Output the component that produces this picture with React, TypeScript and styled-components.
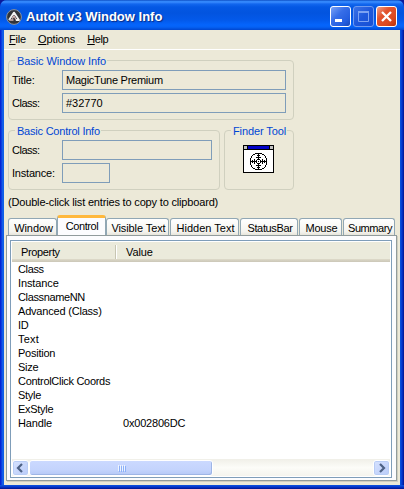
import React from "react";
import styled, { createGlobalStyle } from "styled-components";

const Global = createGlobalStyle`
  * { box-sizing: border-box; }
  body { margin: 0; overflow: hidden; background: #0a1a9a; }
`;

const Frame = styled.div`
  width: 404px;
  height: 489px;
  display: flex;
  flex-direction: column;
  overflow: hidden;
  border-radius: 7px 7px 0 0;
  background: linear-gradient(90deg, #0019cf 0, #0831d9 1px, #166aee 3px, #0855dd 4px, #0855dd 400px, #0436cf 402px, #00138c 404px);
  font: 11px/14px "Liberation Sans", Arial, sans-serif;
  color: #000;
  white-space: nowrap;
  cursor: default;
`;

const TitleBar = styled.header`
  height: 30px;
  flex: none;
  display: flex;
  align-items: center;
  padding: 3px 7px 0 6px;
  background: linear-gradient(180deg, #0a42b8 0, #2b82f5 1px, #3a8cff 2px, #1267ee 4px, #0458e4 7px, #0254df 13px, #0359ea 20px, #0565fc 25px, #0562f5 27px, #0046cf 30px);
`;

const Caption = styled.h1`
  flex: 1;
  margin: 1px 0 0 4px;
  color: #fff;
  font: bold 13px/20px "Liberation Sans", Arial, sans-serif;
  text-shadow: 1px 1px 1px #0a2a80;
`;

const Buttons = styled.div`
  display: flex;
  gap: 2px;
`;

const CaptionButton = styled.button<{ $kind: "min" | "max" | "close" }>`
  width: 21px;
  height: 21px;
  padding: 0;
  display: block;
  border-radius: 3px;
  border: 1px solid ${(p) => (p.$kind === "max" ? "#6e9af0" : "#fff")};
  background: ${(p) =>
    p.$kind === "close"
      ? "linear-gradient(135deg, #f0a18a 0, #e2532d 35%, #dc4a20 70%, #b83208 100%)"
      : p.$kind === "max"
      ? "linear-gradient(135deg, #3c72e6, #1e58dc 50%, #1750d4)"
      : "linear-gradient(135deg, #7aa2f6 0, #376ee8 40%, #245ee0 75%, #1848b8 100%)"};
  svg { display: block; }
`;

const Client = styled.main`
  width: 396px;
  height: 455px;
  margin-left: 4px;
  flex: none;
  background: #ece9d8;
  display: flex;
  flex-direction: column;
`;

const BottomEdge = styled.div`
  flex: 1;
  background: linear-gradient(180deg, #0d56dd, #0535cc 50%, #00138c);
`;

const MenuBar = styled.nav`
  height: 20px;
  flex: none;
  border-bottom: 1px solid #fff;
  display: flex;
  gap: 12px;
  padding: 2px 0 0 5px;
`;

const Txt = styled.span<{ $ls?: number }>`
  display: inline-block;
  letter-spacing: ${(p) => p.$ls ?? 0}px;
  u { text-underline-offset: 1px; }
`;

const Groups = styled.section`
  padding: 10px 0 0 4px;
  display: flex;
  flex-direction: column;
  gap: 10px;
  flex: none;
`;

const GroupRow = styled.div`
  display: flex;
  gap: 4px;
`;

const Group = styled.section<{ $w: number }>`
  width: ${(p) => p.$w}px;
  height: 60px;
  border: 1px solid #d0d0bf;
  border-radius: 4px;
  padding: 0 0 0 3px;
`;

const Legend = styled.h2<{ $ls: number }>`
  width: max-content;
  height: 14px;
  margin: -7px 0 2px 3px;
  padding: 0 1px 0 2px;
  background: #ece9d8;
  color: #0046d5;
  font-size: 11px;
  font-weight: normal;
  letter-spacing: ${(p) => p.$ls}px;
`;

const Field = styled.label`
  height: 20px;
  margin-bottom: 3px;
  display: flex;
`;

const FieldLabel = styled.span<{ $ls: number }>`
  width: 50px;
  padding-top: 3px;
  letter-spacing: ${(p) => p.$ls}px;
`;

const Box = styled.output<{ $w: number; $ls?: number }>`
  width: ${(p) => p.$w}px;
  height: 20px;
  border: 1px solid #7f9db9;
  padding: 2px 0 0 3px;
  line-height: 15px;
  letter-spacing: ${(p) => p.$ls ?? 0}px;
`;

const FinderIcon = styled.svg`
  display: block;
  margin: 7px 0 0 15px;
`;

const Hint = styled.p`
  margin: 5px 0 0 4px;
  height: 14px;
  flex: none;
  letter-spacing: -0.17px;
`;

const TabStrip = styled.div`
  height: 20px;
  margin: 6px 0 0 4px;
  flex: none;
  display: flex;
  align-items: flex-end;
  gap: 1px;
`;

const Tab = styled.div<{ $w: number; $ls: number; $active?: boolean }>`
  width: ${(p) => p.$w}px;
  height: ${(p) => (p.$active ? 21 : 17)}px;
  margin: ${(p) => (p.$active ? "0 -1px -1px -1px" : "0")};
  padding: ${(p) => (p.$active ? "1px 0 0 1px" : "2px 0 0 2px")};
  display: flex;
  justify-content: center;
  border: 1px solid #91a7b4;
  border-bottom: 0;
  border-top: ${(p) => (p.$active ? "3px solid #ffb83c" : "1px solid #91a7b4")};
  border-radius: 3px 3px 0 0;
  background: ${(p) => (p.$active ? "#fcfcfe" : "linear-gradient(#fff, #f4f3ee 80%, #e6e4da)")};
  letter-spacing: ${(p) => p.$ls}px;
`;

const Panel = styled.section`
  width: 391px;
  height: 246px;
  margin-left: 2px;
  flex: none;
  padding: 4px 3px 2px;
  border: 1px solid #919b9c;
  background: #fcfcfe;
  box-shadow: 1px 1px 0 #d0cebf;
`;

const ListView = styled.div`
  width: 382px;
  height: 238px;
  border: 1px solid #7f9db9;
  background: #fff;
  padding: 1px;
  display: flex;
  flex-direction: column;
`;

const HeaderRow = styled.div`
  height: 20px;
  flex: none;
  display: grid;
  grid-template-columns: 105px 1fr;
  background: linear-gradient(#ebeadb 0, #ebeadb 17px, #e0dccb 17px, #d6d2c2 18px, #cbc7b8 20px);
`;

const HeadCell = styled.div<{ $ls: number; $rule?: boolean }>`
  padding: 3px 0 0 9px;
  background: ${(p) =>
    p.$rule ? "linear-gradient(90deg, #c7c5b2 1px, #fff 1px) right 3px / 2px 14px no-repeat" : "none"};
  letter-spacing: ${(p) => p.$ls}px;
`;

const Rows = styled.div`
  flex: 1;
`;

const Row = styled.div`
  height: 14px;
  display: grid;
  grid-template-columns: 105px 1fr;
  padding-left: 6px;
`;

const ScrollBar = styled.div`
  height: 17px;
  flex: none;
  display: flex;
  align-items: center;
  background: linear-gradient(#f0efe8, #fcfcf8 50%, #f5f4ee);
`;

const ScrollButton = styled.div`
  width: 17px;
  height: 16px;
  border: 1px solid #fff;
  border-radius: 3px;
  background: linear-gradient(135deg, #d6e2ff, #b9cbf8);
  box-shadow: inset 0 0 0 1px #b8ccf5;
`;

const Thumb = styled.div`
  width: 184px;
  height: 16px;
  margin-right: auto;
  border: 1px solid #fff;
  border-radius: 3px;
  background: linear-gradient(#cbd9ff, #c4d4fd 60%, #b5c8f6);
  box-shadow: inset -1px -1px 0 #9eb5e6;
  display: flex;
  align-items: center;
  justify-content: center;
  gap: 1px;
`;

const Grip = styled.i`
  width: 1px;
  height: 6px;
  background: #eef4fe;
  box-shadow: 1px 1px 0 #8cb0f8;
`;

const tabs: { name: string; w: number; ls: number; active?: boolean }[] = [
  { name: "Window", w: 49, ls: -0.1 },
  { name: "Control", w: 49, ls: -0.4, active: true },
  { name: "Visible Text", w: 63, ls: -0.1 },
  { name: "Hidden Text", w: 69, ls: 0 },
  { name: "StatusBar", w: 58, ls: -0.35 },
  { name: "Mouse", w: 43, ls: -0.2 },
  { name: "Summary", w: 52, ls: -0.45 },
];

const rows: [string, number, string?][] = [
  ["Class", -0.35],
  ["Instance", -0.12],
  ["ClassnameNN", -0.36],
  ["Advanced (Class)", -0.2],
  ["ID", -0.2],
  ["Text", 0.2],
  ["Position", -0.25],
  ["Size", -0.3],
  ["ControlClick Coords", -0.3],
  ["Style", -0.3],
  ["ExStyle", -0.28],
  ["Handle", -0.15, "0x002806DC"],
];

const AppIcon = () => (
  <svg width="16" height="16" viewBox="0 0 16 16">
    <circle cx="8" cy="8" r="7.4" fill="#30343a" stroke="#8993a4" strokeWidth="1" />
    <path d="M3 11L8 3.6L13 11H9.8" fill="none" stroke="#f4f4f4" strokeWidth="1.8" strokeLinejoin="round" />
    <path d="M3.5 11H7.5M6.2 9.5L8 7L10 10.5" fill="none" stroke="#d8b8b4" strokeWidth="1.3" />
  </svg>
);

const Finder = () => (
  <FinderIcon width="31" height="28" viewBox="0 0 31 28" shapeRendering="crispEdges">
    <path fill="#fff" stroke="#000" d="M.5 .5H30.5V27.5H.5Z" />
    <path fill="#0000c8" d="M4 1H27V4H4Z" />
    <path fill="#c0c0c0" d="M1 1H4V4H1ZM27 1H30V4H27Z" />
    <path stroke="#000" d="M0 4.5H31M4.5 1V4M26.5 1V4" />
    <path stroke="#000" fill="none" d="M12 8.5H19M10 9.5H12M19 9.5H21M9 10.5H10M21 10.5H22M8.5 11V13M22.5 11V13M7.5 13V20M23.5 13V20M8.5 20V22M22.5 20V22M9 22.5H10M21 22.5H22M10 23.5H12M19 23.5H21M12 24.5H19M15.5 8V14M15.5 19V25M7 16.5H13M18 16.5H24M14 10.5H17M13 12.5H18M13 20.5H18M14 22.5H17M9.5 15V18M11.5 14V19M19.5 14V19M21.5 15V18M14 14.5H17M14 18.5H17M13.5 15V18M17.5 15V18M15 16.5H16" />
  </FinderIcon>
);

export default function App() {
  return (
    <>
      <Global />
      <Frame>
        <TitleBar>
          <AppIcon />
          <Caption>AutoIt v3 Window Info</Caption>
          <Buttons>
            <CaptionButton $kind="min" aria-label="Minimize">
              <svg width="19" height="19"><path d="M4 12H11V15H4Z" fill="#fff" /></svg>
            </CaptionButton>
            <CaptionButton $kind="max" aria-label="Maximize">
              <svg width="19" height="19"><path d="M4.5 5V14.5H14.5V5M4 5H15" fill="none" stroke="#7ca2f2" /><path d="M4 4H15V6H4Z" fill="#7ca2f2" /></svg>
            </CaptionButton>
            <CaptionButton $kind="close" aria-label="Close">
              <svg width="19" height="19"><path d="M5 5L14 14M14 5L5 14" stroke="#fff" strokeWidth="2.3" /></svg>
            </CaptionButton>
          </Buttons>
        </TitleBar>
        <Client>
          <MenuBar>
            <Txt $ls={-0.2}><u>F</u>ile</Txt>
            <Txt $ls={-0.1}><u>O</u>ptions</Txt>
            <Txt $ls={-0.4}><u>H</u>elp</Txt>
          </MenuBar>
          <Groups>
            <Group $w={286}>
              <Legend $ls={-0.08}>Basic Window Info</Legend>
              <Field><FieldLabel $ls={-0.1}>Title:</FieldLabel><Box $w={224} $ls={-0.25}>MagicTune Premium</Box></Field>
              <Field><FieldLabel $ls={-0.5}>Class:</FieldLabel><Box $w={224}>#32770</Box></Field>
            </Group>
            <GroupRow>
              <Group $w={212}>
                <Legend $ls={-0.22}>Basic Control Info</Legend>
                <Field><FieldLabel $ls={-0.5}>Class:</FieldLabel><Box $w={150} /></Field>
                <Field><FieldLabel $ls={-0.2}>Instance:</FieldLabel><Box $w={48} /></Field>
              </Group>
              <Group $w={70}>
                <Legend $ls={-0.1}>Finder Tool</Legend>
                <Finder />
              </Group>
            </GroupRow>
          </Groups>
          <Hint>(Double-click list entries to copy to clipboard)</Hint>
          <TabStrip>
            {tabs.map((t) => (
              <Tab key={t.name} $w={t.w} $ls={t.ls} $active={t.active}>{t.name}</Tab>
            ))}
          </TabStrip>
          <Panel>
            <ListView>
              <HeaderRow>
                <HeadCell $ls={-0.35} $rule>Property</HeadCell>
                <HeadCell $ls={-0.1}>Value</HeadCell>
              </HeaderRow>
              <Rows>
                {rows.map(([name, ls, value]) => (
                  <Row key={name}>
                    <Txt $ls={ls}>{name}</Txt>
                    <Txt $ls={-0.2}>{value}</Txt>
                  </Row>
                ))}
              </Rows>
              <ScrollBar>
                <ScrollButton>
                  <svg width="15" height="14"><path d="M9 3L5 7L9 11" fill="none" stroke="#4d6185" strokeWidth="2.2" /></svg>
                </ScrollButton>
                <Thumb><Grip /><Grip /><Grip /><Grip /></Thumb>
                <ScrollButton>
                  <svg width="15" height="14"><path d="M6 3L10 7L6 11" fill="none" stroke="#4d6185" strokeWidth="2.2" /></svg>
                </ScrollButton>
              </ScrollBar>
            </ListView>
          </Panel>
        </Client>
        <BottomEdge />
      </Frame>
    </>
  );
}
